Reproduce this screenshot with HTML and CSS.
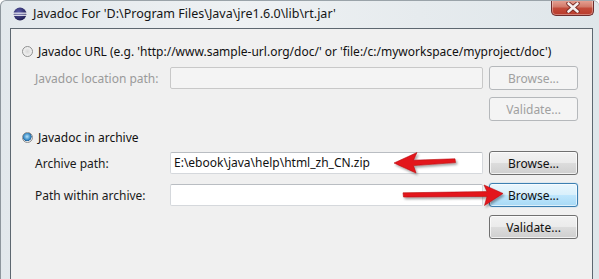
FILE: index.html
```html
<!DOCTYPE html>
<html>
<head>
<meta charset="utf-8">
<link rel="stylesheet" href="styles.css">
</head>
<body>
<div class="window">
  <div class="titlebar">
    <svg class="app-icon" width="16" height="16" viewBox="0 0 16 16">
      <defs>
        <radialGradient id="sph" cx="0.4" cy="0.35" r="0.7">
          <stop offset="0" stop-color="#5a5aa8"/>
          <stop offset="1" stop-color="#1d1b4e"/>
        </radialGradient>
      </defs>
      <circle cx="8" cy="8" r="6.5" fill="url(#sph)"/>
      <rect x="1" y="6.6" width="14" height="1.1" fill="#ffffff"/>
      <rect x="1.2" y="8.7" width="13.6" height="1.1" fill="#ffffff"/>
    </svg>
    <span class="title">Javadoc For 'D:\Program Files\Java\jre1.6.0\lib\rt.jar'</span>
    <div class="close">
      <svg width="18" height="11" viewBox="0 0 18 11">
        <path d="M4.5 1.5 L13.5 9.5 M13.5 1.5 L4.5 9.5" stroke="#7a2a24" stroke-width="4.4" stroke-linecap="round"/>
        <path d="M4.5 1.5 L13.5 9.5 M13.5 1.5 L4.5 9.5" stroke="#f4efee" stroke-width="2.6" stroke-linecap="round"/>
      </svg>
    </div>
  </div>
  <div class="content">
    <div class="row radio-row r-a">
      <span class="radio"></span>
      <span class="radio-label">Javadoc URL (e.g. 'http://www.sample-url.org/doc/' or 'file:/c:/myworkspace/myproject/doc')</span>
    </div>
    <div class="row field-row r-b">
      <span class="label disabled">Javadoc location path:</span>
      <span class="input input-disabled"></span>
      <span class="btn btn-disabled">Browse...</span>
    </div>
    <div class="row btn-row r-c">
      <span class="btn btn-disabled">Validate...</span>
    </div>
    <div class="row radio-row r-d">
      <span class="radio checked"></span>
      <span class="radio-label">Javadoc in archive</span>
    </div>
    <div class="row field-row r-e">
      <span class="label">Archive path:</span>
      <span class="input">E:\ebook\java\help\html_zh_CN.zip</span>
      <span class="btn">Browse...</span>
    </div>
    <div class="row field-row r-f">
      <span class="label">Path within archive:</span>
      <span class="input"></span>
      <span class="btn btn-focus">Browse...</span>
    </div>
    <div class="row btn-row r-g">
      <span class="btn">Validate...</span>
    </div>
  </div>
  <svg class="arrows" viewBox="0 0 599 279" width="599" height="279">
    <defs>
      <filter id="sh" x="-20%" y="-50%" width="140%" height="200%">
        <feDropShadow dx="1.5" dy="2" stdDeviation="1.3" flood-color="#000" flood-opacity="0.35"/>
      </filter>
    </defs>
    <g filter="url(#sh)" fill="#e3141a" stroke="#b80d12" stroke-width="0.6">
      <path d="M394 163 L417 152.5 L413.5 160.2 L455 158.8 L455.5 162.6 L413.5 165.6 L416 173 Z"/>
      <path d="M503 193.5 L484 185 L487 191.6 L403 192.8 L403.5 197 L487 196.4 L484.5 205.5 Z"/>
    </g>
  </svg>
</div>
</body>
</html>
```

FILE: styles.css
```css
* { box-sizing: border-box; }
html, body { margin: 0; padding: 0; }
body {
  width: 599px;
  height: 279px;
  overflow: hidden;
  font-family: "Noto Sans", "Open Sans", sans-serif;
  font-size: 12px;
  color: #1a1a1a;
}
.window {
  position: relative;
  width: 599px;
  height: 279px;
  background: linear-gradient(90deg, #e2e8ec 0%, #eef1f3 40%, #e6ebee 70%, #dfe6ea 100%);
  border-left: 1px solid #8d969d;
  border-top: 1px solid #9aa3a9;
  border-top-left-radius: 6px;
  border-top-right-radius: 6px;
  overflow: hidden;
}
.titlebar {
  height: 27px;
  display: flex;
  align-items: flex-start;
  padding-left: 11px;
}
.app-icon {
  margin-top: 5px;
  flex: none;
}
.title {
  margin-left: 5px;
  margin-top: 4px;
  font-size: 12.5px;
  color: #151515;
  white-space: nowrap;
}
.close {
  margin-left: auto;
  margin-right: 5px;
  margin-top: -1px;
  width: 43px;
  height: 16px;
  border: 1px solid #6d2d2d;
  border-top: none;
  border-radius: 0 0 5px 5px;
  background: linear-gradient(180deg, #e8a597 0%, #d27a6a 45%, #c34b3a 55%, #b83a2c 100%);
  display: flex;
  align-items: center;
  justify-content: center;
  box-shadow: inset 0 0 0 1px rgba(255,255,255,0.35);
}
.content {
  margin-left: 9px;
  margin-right: 6px;
  height: 260px;
  background: #f0f0f0;
  border: 1px solid #5d6770;
  padding-top: 14px;
  padding-left: 11px;
  display: flex;
  flex-direction: column;
}
.row { display: flex; align-items: center; }
.radio-row { height: 16px; }
.field-row { height: 24px; padding-left: 13px; }
.btn-row { height: 24px; padding-left: 467px; }
.r-b { margin-top: 7px; }
.r-c { margin-top: 7px; }
.r-d { margin-top: 8px; }
.r-e { margin-top: 6px; }
.r-f { margin-top: 8px; }
.r-g { margin-top: 8px; }

.radio {
  width: 11px;
  height: 11px;
  border-radius: 50%;
  border: 1px solid #8e8f8f;
  background: radial-gradient(circle at 50% 50%, #d8d8d8 0%, #ececec 55%, #f8f8f8 100%);
  flex: none;
  position: relative;
}
.radio.checked {
  background: radial-gradient(circle at 45% 40%, #b6e2f8 0%, #3a8cc8 45%, #1d5c94 60%, #e9e9e9 64%, #f4f4f4 100%);
}
.radio-label {
  margin-left: 5px;
  white-space: nowrap;
  color: #111;
}
.label {
  width: 135px;
  flex: none;
  white-space: nowrap;
  color: #1a1a1a;
}
.label.disabled { color: #9a9a9a; }
.input {
  width: 313px;
  height: 22px;
  flex: none;
  background: #ffffff;
  border: 1px solid #d5d8dc;
  border-top-color: #b9bdc2;
  border-radius: 2px;
  padding-left: 3px;
  line-height: 20px;
  white-space: nowrap;
  color: #111;
}
.input-disabled {
  background: #f4f4f4;
  border-color: #c8c8c8;
}
.btn {
  width: 89px;
  height: 24px;
  margin-left: 6px;
  flex: none;
  border: 1px solid #707070;
  border-radius: 3px;
  background: linear-gradient(180deg, #f2f2f2 0%, #ebebeb 48%, #dcdcdc 52%, #cfcfcf 100%);
  box-shadow: inset 0 0 0 1px rgba(255,255,255,0.7);
  display: flex;
  align-items: center;
  justify-content: center;
  color: #111;
  white-space: nowrap;
}
.btn-row .btn { margin-left: 0; }
.btn-disabled {
  border-color: #b5b8bb;
  background: #f4f4f4;
  box-shadow: none;
  color: #a0a0a0;
}
.btn-focus {
  border-color: #3c7fb1;
  background: linear-gradient(180deg, #eaf6fd 0%, #d9f0fc 48%, #bee6fd 52%, #a7d9f5 100%);
  box-shadow: inset 0 0 0 1px rgba(255,255,255,0.6), 0 0 1px #48a7dc;
}
.arrows {
  position: absolute;
  left: -1px;
  top: -1px;
  pointer-events: none;
}
```
